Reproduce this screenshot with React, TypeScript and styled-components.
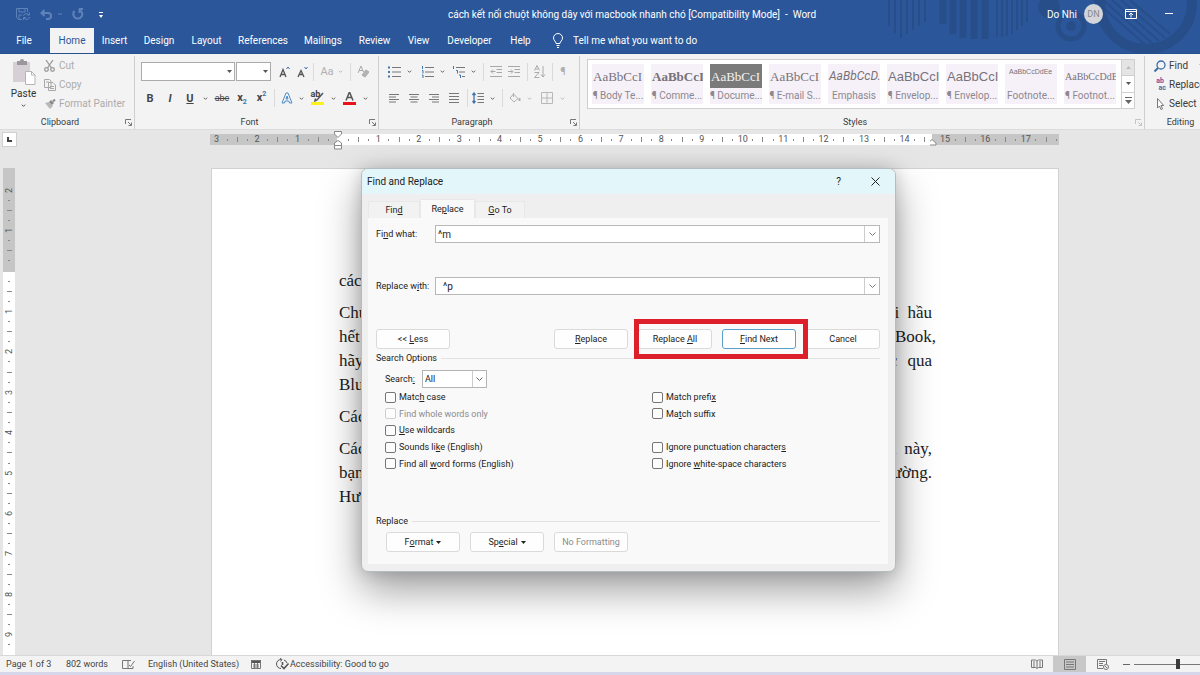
import React from 'react';
import styled, { createGlobalStyle, css } from 'styled-components';

const ui = `Roboto, 'Open Sans', sans-serif`;
const serif = `'Liberation Serif', serif`;

const Global = createGlobalStyle`
  *, *::before, *::after { box-sizing: border-box; }
  body { margin: 0; font-family: ${ui}; font-size: 9px; color: #333; background: #e6e6e6; }
  button, input, select { font-family: inherit; font-size: inherit; color: inherit; margin: 0; }
  button { padding: 0; border: 0; background: none; white-space: nowrap; }
  svg { display: block; flex: none; }
`;

const Shell = styled.div`
  position: relative;
  min-height: 100vh;
  display: flex;
  flex-direction: column;
  overflow: hidden;
`;

/* ---------- header ---------- */
const Header = styled.header`
  position: relative;
  background: #2b579a;
  color: #fff;
  border-bottom: 1px solid #24508f;
`;
const Decoration = styled.svg`
  position: absolute;
  top: 0;
  right: 0;
`;
const TitleBar = styled.div`
  position: relative;
  display: grid;
  grid-template-columns: 217px 1fr 153px;
  align-items: center;
  height: 28px;
`;
const QuickAccess = styled.div`
  display: flex;
  align-items: center;
  gap: 10px;
  padding-left: 16px;
  color: #5f82b8;
`;
const Title = styled.div`
  text-align: center;
  font-size: 10px;
  line-height: 16px;
  padding-top: 2px;
  white-space: nowrap;
`;
const Account = styled.div`
  display: flex;
  align-items: center;
  font-size: 10px;
  white-space: nowrap;
`;
const UserName = styled.span`
  width: 31px;
`;
const Avatar = styled.span`
  width: 20px;
  height: 20px;
  margin: 0 22px 0 7px;
  border-radius: 50%;
  background: #d4d6da;
  color: #888;
  font-size: 9px;
  line-height: 20px;
  text-align: center;
`;
const WindowButton = styled.button`
  display: flex;
  margin-right: 27px;
`;
const Tabs = styled.nav`
  position: relative;
  display: flex;
  height: 25px;
`;
const Tab = styled.button<{ $w: number; $active?: boolean }>`
  width: ${p => p.$w}px;
  font-size: 10px;
  line-height: 26px;
  ${p => p.$active && css`background: #f3f3f3; color: #2b579a;`}
`;
const FileTab = styled(Tab)`
  margin-right: 2px;
`;
const Tell = styled.button`
  display: flex;
  align-items: center;
  gap: 9px;
  margin-left: 12px;
  font-size: 10px;
`;

/* ---------- ribbon ---------- */
const Ribbon = styled.section`
  display: flex;
  height: 76px;
  padding-top: 2px;
  background: #f3f3f3;
  border-bottom: 1px solid #dcdcdc;
  overflow: hidden;
`;
const Group = styled.div<{ $w?: number }>`
  display: flex;
  flex-direction: column;
  flex: ${p => (p.$w ? `0 0 ${p.$w}px` : '1 1 0')};
  min-width: 0;
  border-right: 1px solid #cfcfcf;
  overflow: hidden;
  &:last-child { border-right: 0; }
`;
const GroupBody = styled.div<{ $pad?: number }>`
  flex: 1;
  min-height: 0;
  padding-left: ${p => p.$pad ?? 0}px;
`;
const GroupLabel = styled.div<{ $faint?: boolean; $plain?: boolean }>`
  position: relative;
  height: 14px;
  padding-right: ${p => (p.$plain ? 0 : 14)}px;
  line-height: 14px;
  text-align: center;
  color: #3b3b3b;
  svg { position: absolute; right: 2px; top: 4px; color: ${p => (p.$faint ? '#c4c4c4' : '#777')}; }
`;
const ClipBody = styled(GroupBody)`
  display: flex;
`;
const PasteButton = styled.button`
  display: flex;
  flex-direction: column;
  align-items: center;
  width: 44px;
  padding: 3px 0 0 3px;
  line-height: 18px;
  font-size: 10px;
`;
const Commands = styled.div<{ $faint?: boolean }>`
  display: flex;
  flex-direction: column;
  color: ${p => (p.$faint ? '#ababab' : '#3b3b3b')};
`;
const Command = styled.button`
  display: flex;
  align-items: center;
  gap: 3px;
  height: 19px;
  font-size: 10px;
`;
const ToolRow = styled.div<{ $h: number }>`
  display: flex;
  align-items: center;
  height: ${p => p.$h}px;
`;
const Tool = styled.button<{ $w: number; $faint?: boolean }>`
  display: flex;
  align-items: center;
  justify-content: center;
  width: ${p => p.$w}px;
  height: 20px;
  font-size: 11px;
  color: ${p => (p.$faint ? '#b0b0b0' : '#444')};
`;
const Sep = styled.span<{ $w: number }>`
  width: ${p => p.$w}px;
  height: 18px;
  background: linear-gradient(#dadada, #dadada) center / 1px 100% no-repeat;
`;
const Script = styled.b`
  font-size: 11px;
  line-height: 12px;
  sub, sup { font-size: 7px; line-height: 0; color: #3f74ad; }
`;
const SmallStrike = styled.s`
  font-size: 9px;
`;
const SmallText = styled.b`
  position: absolute;
  left: 0;
  top: -3px;
  font-size: 9px;
`;
const Stack = styled.span`
  position: relative;
`;
const ReplaceGlyph = styled.span`
  display: flex;
  flex-direction: column;
  width: 12px;
  font-size: 7px;
  line-height: 7px;
  font-weight: 700;
  color: #8a4a9c;
  span + span { color: #3d6fa8; text-align: right; }
`;
const SelectWrap = styled.span<{ $w: number }>`
  position: relative;
  display: block;
  width: ${p => p.$w}px;
  margin-right: 1px;
  svg { position: absolute; right: 3px; top: 8px; pointer-events: none; }
`;
const RibbonSelect = styled.select`
  appearance: none;
  display: block;
  width: 100%;
  height: 19px;
  background: #fff;
  border: 1px solid #ababab;
  border-radius: 0;
`;
const Gallery = styled.div`
  display: flex;
  height: 50px;
  margin: 3px 9px 0 0;
  background: #fff;
  border: 1px solid #cfcfcf;
`;
const GalleryItems = styled.div`
  display: flex;
  flex: 1;
  min-width: 0;
  gap: 7px;
  padding: 4px 5px 4px 4px;
`;
const StyleItem = styled.button`
  flex: 1 1 0;
  min-width: 0;
  background: #f6f1f8;
  color: #8c8790;
  overflow: hidden;
`;
const Preview = styled.span<{ $kind: string }>`
  display: block;
  height: 24px;
  line-height: 25px;
  font-family: ${serif};
  font-size: 13px;
  text-align: left;
  padding-left: 1px;
  overflow: hidden;
  color: #77727a;
  ${p => p.$kind === 'bold' && css`font-weight: 700;`}
  ${p => p.$kind === 'inverse' && css`background: #7a7a7a; color: #f2f2f2;`}
  ${p => p.$kind === 'italic' && css`font-family: ${ui}; font-style: italic; font-size: 12px;`}
  ${p => p.$kind === 'sans' && css`font-family: 'Liberation Sans', sans-serif;`}
  ${p => p.$kind === 'tiny' && css`font-family: 'Liberation Sans', sans-serif; font-size: 7px; line-height: 15px; padding-left: 4px;`}
  ${p => p.$kind === 'small' && css`font-size: 10px;`}
`;
const StyleName = styled.span`
  display: block;
  font-size: 10px;
  line-height: 16px;
`;
const GalleryScroll = styled.div`
  display: flex;
  flex-direction: column;
  width: 13px;
  border-left: 1px solid #cfcfcf;
  button {
    flex: 1;
    display: flex;
    align-items: center;
    justify-content: center;
    color: #666;
  }
  button + button { border-top: 1px solid #cfcfcf; }
  button:first-child { background: #e4e4e4; color: #bbb; }
`;
const EditingInner = styled.div`
  display: flex;
  flex-direction: column;
  height: 100%;
  width: 71px;
`;

/* ---------- rulers and document ---------- */
const RulerRow = styled.div`
  display: flex;
  height: 22px;
  padding: 2px 141px 0 2px;
`;
const TabStop = styled.button`
  display: flex;
  align-items: center;
  justify-content: center;
  width: 15px;
  height: 15px;
  background: #fff;
  border: 1px solid #d0d0d0;
`;
const HRuler = styled.div`
  flex: 1;
  height: 11px;
  margin: 2px 0 0 193px;
  background: linear-gradient(90deg, #c6c6c6 15%, #fff 15%, #fff 85%, #c6c6c6 85%);
`;
const HMarks = styled.div`
  display: flex;
  height: 11px;
  margin: 0 -2px 0 2px;
`;
const Mark = styled.span<{ $tick?: number }>`
  position: relative;
  display: flex;
  flex: 1 1 0;
  min-width: 0;
  align-items: center;
  justify-content: center;
  line-height: 11px;
  color: #555;
  white-space: nowrap;
  &::after {
    content: '';
    width: 1px;
    height: ${p => p.$tick ?? 0}px;
    background: #888;
  }
`;
const Marker = styled.svg`
  position: absolute;
  top: -3px;
  left: 50%;
  margin-left: -5px;
`;
const Workspace = styled.main`
  display: flex;
  flex: 1;
  padding: 16px 141px 0 3px;
`;
const VRuler = styled.div`
  position: relative;
  display: flex;
  flex-direction: column;
  width: 12px;
  padding-top: 17px;
  margin: 0 196px -5px 0;
  background: linear-gradient(#c6c6c6 104px, #fff 104px);
`;
const VMark = styled(Mark)`
  min-height: 0;
  &::after {
    width: ${p => p.$tick ?? 0}px;
    height: 1px;
  }
`;
const Turned = styled.span`
  writing-mode: vertical-rl;
  transform: rotate(180deg);
`;
const Page = styled.article`
  flex: 1;
  min-width: 0;
  padding: 100px 126px 0 127px;
  background: #fff;
  border: 1px solid #d2d2d2;
  border-bottom: 0;
  font-family: ${serif};
  font-size: 17px;
  line-height: 24px;
  color: #1c1c1c;
`;
const Para = styled.p`
  margin: 0 0 8px;
`;
const Line = styled.span<{ $open?: boolean; $hang?: boolean }>`
  display: block;
  margin-right: ${p => (p.$hang ? -4 : 0)}px;
  white-space: nowrap;
  text-align: justify;
  text-align-last: ${p => (p.$open ? 'left' : 'justify')};
`;

/* ---------- status bar ---------- */
const StatusBar = styled.footer`
  position: relative;
  display: flex;
  align-items: center;
  height: 20px;
  padding-left: 6px;
  background: #f3f3f3;
  border-top: 1px solid #d8d8d8;
  border-bottom: 3px solid #d6d7ea;
  color: #444;
  white-space: nowrap;
`;
const StatusItem = styled.span<{ $w: number }>`
  display: flex;
  align-items: center;
  width: ${p => p.$w}px;
`;
const Push = styled.span`
  flex: 1;
`;
const ViewButton = styled.button<{ $on?: boolean }>`
  display: flex;
  align-items: center;
  justify-content: center;
  width: 33px;
  height: 16px;
  color: #777;
  background: ${p => (p.$on ? '#c8c8c8' : 'transparent')};
`;
const ZoomSlider = styled.input`
  appearance: none;
  width: 66px;
  height: 12px;
  background: linear-gradient(#777, #777) center / 100% 1px no-repeat;
  &::-webkit-slider-thumb {
    appearance: none;
    width: 4px;
    height: 10px;
    background: #3a3a3a;
  }
`;

/* ---------- dialog ---------- */
const Dialog = styled.section`
  position: absolute;
  top: 168px;
  left: 361px;
  width: 535px;
  background: #efefef;
  border: 1px solid #b4bdbf;
  border-radius: 7px;
  box-shadow: 0 18px 40px rgba(0, 0, 0, 0.38), 0 0 16px rgba(0, 0, 0, 0.16);
  color: #222;
  overflow: hidden;
`;
const DialogTitle = styled.div`
  display: flex;
  align-items: center;
  height: 25px;
  padding: 0 15px 0 5px;
  background: #e3f6f9;
  font-size: 10px;
  h2 { flex: 1; margin: 0; font-size: 10px; line-height: 14px; font-weight: 400; }
  button + button { margin-left: 30px; }
`;
const DialogTabs = styled.div`
  display: flex;
  align-items: flex-end;
  height: 24px;
  padding-left: 6px;
`;
const DialogTab = styled.button<{ $w: number; $on?: boolean }>`
  width: ${p => p.$w}px;
  height: ${p => (p.$on ? 19 : 17)}px;
  background: ${p => (p.$on ? '#f9f9f9' : '#f2f2f2')};
  border: 1px solid #e8e8e8;
  border-bottom: 0;
`;
const Panel = styled.form`
  margin: 0 7px 7px 6px;
  padding: 7px 8px 12px 8px;
  background: #f9f9f9;
`;
const Field = styled.div`
  display: flex;
  align-items: center;
  height: 18px;
  margin-bottom: 34px;
  label { width: 59px; white-space: nowrap; }
`;
const Combo = styled.div`
  display: flex;
  flex: 1;
  height: 18px;
  background: #fff;
  border: 1px solid #b8b8b8;
  input {
    flex: 1;
    min-width: 0;
    padding: 0 2px;
    border: 0;
    outline: 0;
    background: none;
    font-size: 10px;
  }
  button {
    display: flex;
    align-items: center;
    justify-content: center;
    width: 15px;
    border-left: 1px solid #ccc;
    color: #777;
  }
`;
const ButtonRow = styled.div`
  display: flex;
  gap: 10px;
`;
const Btn = styled.button<{ $primary?: boolean }>`
  display: flex;
  align-items: center;
  justify-content: center;
  width: 74px;
  height: 20px;
  background: #fefefe;
  border: 1px solid ${p => (p.$primary ? '#5ba0c8' : '#dadada')};
  border-radius: 3px;
  white-space: pre;
  svg { margin-left: 3px; }
  &:disabled { color: #8c8c8c; }
`;
const Highlight = styled.div`
  position: relative;
  display: flex;
  gap: 10px;
  &::after {
    content: '';
    position: absolute;
    inset: -10px -12px -10px -4px;
    border: 5px solid #dc1f2b;
    pointer-events: none;
  }
`;
const Section = styled.div`
  display: flex;
  align-items: center;
  gap: 4px;
  height: 14px;
  margin-top: 2px;
  &::after { content: ''; flex: 1; height: 1px; background: #e2e2e2; }
`;
const SearchRow = styled.div`
  display: flex;
  align-items: center;
  height: 19px;
  margin: 4px 0 1px;
  padding-left: 9px;
  label { width: 37px; }
`;
const SearchWrap = styled.span`
  position: relative;
  width: 65px;
  svg { position: absolute; right: 4px; top: 7px; color: #666; pointer-events: none; }
  &::after {
    content: '';
    position: absolute;
    top: 1px;
    bottom: 1px;
    right: 14px;
    width: 1px;
    background: #ccc;
  }
`;
const SearchSelect = styled.select`
  appearance: none;
  display: block;
  width: 100%;
  height: 18px;
  padding: 0 2px;
  background: #fff;
  border: 1px solid #b4b4b4;
  border-radius: 0;
`;
const Options = styled.div`
  display: grid;
  grid-template-columns: 267px 1fr;
  grid-template-rows: repeat(5, 1fr);
  grid-auto-flow: column;
  height: 83px;
  padding-left: 9px;
  margin-bottom: 42px;
`;
const Option = styled.label<{ $off?: boolean }>`
  display: flex;
  align-items: center;
  gap: 3px;
  color: ${p => (p.$off ? '#8c8c8c' : 'inherit')};
  input {
    appearance: none;
    width: 11px;
    height: 11px;
    border: 1px solid ${p => (p.$off ? '#cfcfcf' : '#767676')};
    border-radius: 2px;
    background: #fdfdfd;
  }
`;
const FormatRow = styled(ButtonRow)`
  margin-top: 4px;
  padding-left: 10px;
`;

/* ---------- small drawings ---------- */
const Chevron = ({ s = 5 }: { s?: number }) => (
  <svg width={s} height={s} viewBox="0 0 6 6" fill="none" stroke="currentColor"><path d="M1 2l2 2 2-2" /></svg>
);
const Caret = ({ color = '#555' }: { color?: string }) => (
  <svg width="5" height="3" viewBox="0 0 5 3" fill={color}><path d="M0 0h5L2.500 3z" /></svg>
);
const BigChevron = () => (
  <svg width="7" height="5" viewBox="0 0 7 5" fill="none" stroke="currentColor"><path d="M.5.5l3 3 3-3" /></svg>
);
const Launcher = () => (
  <svg width="7" height="7" viewBox="0 0 7 7" fill="none" stroke="currentColor"><path d="M.5 5V.5H6M3 3l3 3M6.500 3.500v3h-3" /></svg>
);
const Lines = ({ d }: { d: string }) => (
  <svg width="12" height="12" viewBox="0 0 12 12" fill="none" stroke="#777"><path d={d} /></svg>
);
const ListIcon = ({ numbered }: { numbered?: boolean }) => (
  <svg width="13" height="12" viewBox="0 0 13 12" fill="none">
    <path d="M4 1.500h9M4 6h9M4 10.500h9" stroke="#777" />
    <path d={numbered ? 'M1.500 0v3M1 4.500h1v3M1 9h1v3' : 'M0 1.500h2M0 6h2M0 10.500h2'} stroke="#3f74ad" strokeWidth={numbered ? 1 : 2} />
  </svg>
);
const IndentIcon = ({ right }: { right?: boolean }) => (
  <svg width="12" height="11" viewBox="0 0 12 11" fill="none" stroke="#a8a8a8">
    <path d="M0 .5h12M6.500 3.500H12M6.500 6.500H12M0 10.500h12" />
    <path d={right ? 'M0 5.500h4.500M3 3.500l2 2-2 2' : 'M5.500 5.500H1M3 3.500l-2 2 2 2'} />
  </svg>
);

const tabs: [string, number][] = [
  ['Insert', 41], ['Design', 48], ['Layout', 47], ['References', 66], ['Mailings', 54],
  ['Review', 49], ['View', 39], ['Developer', 63], ['Help', 39],
];
const styles: [string, string, string][] = [
  ['AaBbCcI', '¶ Body Te...', 'plain'], ['AaBbCcI', '¶ Comme...', 'bold'], ['AaBbCcI', '¶ Docume...', 'inverse'],
  ['AaBbCcI', '¶ E-mail S...', 'plain'], ['AaBbCcD.', 'Emphasis', 'italic'], ['AaBbCcI', '¶ Envelop...', 'sans'],
  ['AaBbCcI', '¶ Envelop...', 'sans'], ['AaBbCcDdEe', 'Footnote...', 'tiny'], ['AaBbCcDdE', '¶ Footnot...', 'small'],
];
const hMarks = Array.from({ length: 84 }, (_, i) => i - 12);
const vMarks = Array.from({ length: 47 }, (_, i) => i - 8);
const tickSize = (n: number) => (n % 4 === 0 ? 0 : n % 2 === 0 ? 5 : 2);

const leftOptions: [React.ReactNode, boolean][] = [
  [<>Matc<u>h</u> case</>, false],
  [<>Find whole words only</>, true],
  [<><u>U</u>se wildcards</>, false],
  [<>Sounds li<u>k</u>e (English)</>, false],
  [<>Find all <u>w</u>ord forms (English)</>, false],
];

export default function App() {
  return (
    <Shell>
      <Global />
      <Header>
        <Decoration width="320" height="53" viewBox="0 0 320 53" fill="none" stroke="#284e8a">
          <path d="M9 0v26M15 0v33M21 0v38M27 0v34M33 0v30M39 0v26M45 0v22" strokeWidth="2" />
          <path d="M63 0v24M73 0v34M83 0v38M94 0v39M105 0v39" strokeWidth="7" />
          <path d="M117 0v37M122 0v37M127 0v36M132 0v34M137 0v30M142 0v26M147 0v22" strokeWidth="2" />
          <circle cx="169" cy="7" r="11" fill="#284e8a" stroke="none" />
          <circle cx="191" cy="26" r="13" strokeWidth="5" />
          <circle cx="191" cy="26" r="5" fill="#284e8a" stroke="none" />
          <circle cx="266" cy="3" r="46" strokeWidth="10" />
          <path d="M223 0l50 44M232 0l47 41M241 0l44 38M250 0l40 34M214 0l54 47" strokeWidth="2" />
        </Decoration>
        <TitleBar>
          <QuickAccess>
            <svg width="14" height="12" viewBox="0 0 14 12" fill="none" stroke="currentColor"><path d="M6 11.500H2.500l-2-2V.5h11V4M3 .5v3.500h6V.5M3 11V7h3M7.500 8a3 3 0 015.500-1M13.500 9a3 3 0 01-5.500 1M13.500 4.500V7H11M7.500 12V9.500H10" /></svg>
            <svg width="22" height="11" viewBox="0 0 22 11" fill="none" stroke="currentColor" strokeWidth="2"><path d="M4.500 1L1.500 4l3 3M2 4h6a3 3 0 010 6H6" /><path d="M18 5h4" strokeWidth="1" /></svg>
            <svg width="12" height="12" viewBox="0 0 12 12" fill="none" stroke="currentColor" strokeWidth="2"><path d="M8.500 2.500A4.500 4.500 0 112.500 3M7 1h4M7.500 1v4" /></svg>
            <svg width="12" height="7" viewBox="0 0 12 7"><path d="M5 1.500h4" stroke="#fff" /><path d="M5 4h4l-2 3z" fill="#fff" /></svg>
          </QuickAccess>
          <Title>cách kết nối chuột không dây với macbook nhanh chó [Compatibility Mode]&nbsp; -&nbsp; Word</Title>
          <Account>
            <UserName>Do Nhi</UserName>
            <Avatar>DN</Avatar>
            <WindowButton aria-label="Ribbon display options">
              <svg width="12" height="10" viewBox="0 0 12 10" fill="none" stroke="#fff"><path d="M.5.5h11v9H.5zM.5 2.500h11M6 8.500V4.500M4 6l2-2 2 2" /></svg>
            </WindowButton>
            <WindowButton aria-label="Minimize">
              <svg width="9" height="5" viewBox="0 0 9 5" stroke="#fff"><path d="M1 1.500h8" /></svg>
            </WindowButton>
          </Account>
        </TitleBar>
        <Tabs>
          <FileTab $w={48}>File</FileTab>
          <Tab $w={44} $active>Home</Tab>
          {tabs.map(([t, w]) => <Tab key={t} $w={w}>{t}</Tab>)}
          <Tell>
            <svg width="12" height="15" viewBox="0 0 12 15" fill="none" stroke="#fff"><path d="M4 10.500C4 8.500 1.500 7.500 1.500 5a4.500 4.500 0 019 0c0 2.500-2.500 3.500-2.500 5.500zM4.500 12.500h3M5 14.500h2" /></svg>
            Tell me what you want to do
          </Tell>
        </Tabs>
      </Header>

      <Ribbon>
        <Group $w={135}>
          <ClipBody>
            <PasteButton>
              <svg width="24" height="26" viewBox="0 0 24 26"><path d="M1 3h17v20H1z" fill="#d6d0d6" /><path d="M5 2h3a2 2 0 014 0h3v4H5z" fill="#9a969a" /><path d="M13.500 12.500h6l3.500 3.500v9.500h-9.500z" fill="#fff" stroke="#b5b5b5" /><path d="M19.500 12.500V16H23" fill="none" stroke="#b5b5b5" /></svg>
              Paste
              <Chevron />
            </PasteButton>
            <Commands $faint>
              <Command>
                <svg width="12" height="12" viewBox="0 0 12 12" fill="none" stroke="#9a9a9a" strokeWidth="1.300"><path d="M2 0l5.500 8M9 0L3.500 8" /><circle cx="2.500" cy="9.500" r="1.800" /><circle cx="8.500" cy="9.500" r="1.800" /></svg>
                Cut
              </Command>
              <Command>
                <svg width="12" height="12" viewBox="0 0 12 12" fill="#f3f3f3" stroke="#a8a8a8"><path d="M.5.5h5l1.500 1.500v6.500H.5zM4.500 3.500h4.500l2.500 2.500v5.500h-7zM6 7.500h4M6 9.500h4M2 3h3" /></svg>
                Copy
              </Command>
              <Command>
                <svg width="12" height="12" viewBox="0 0 12 12"><path d="M1 5l4-1 4 4-3 3z" fill="#b9b9b9" /><path d="M5 4l2-2 3 3-2 2z" fill="#8a8a8a" /><path d="M9 3.500L11 1.500" stroke="#8a8a8a" strokeWidth="2" /></svg>
                Format Painter
              </Command>
            </Commands>
          </ClipBody>
          <GroupLabel>Clipboard<Launcher /></GroupLabel>
        </Group>

        <Group $w={244}>
          <GroupBody $pad={6}>
            <ToolRow $h={31}>
              <SelectWrap $w={94}><RibbonSelect aria-label="Font" /><Caret /></SelectWrap>
              <SelectWrap $w={35}><RibbonSelect aria-label="Font size" /><Caret /></SelectWrap>
              <Tool $w={24} aria-label="Grow font"><svg width="11" height="12" viewBox="0 0 11 12" fill="none"><path d="M1 11L4 3.500 7 11M2 8.500h4" stroke="#555" strokeWidth="1.300" /><path d="M7.500 3L9 1l1.500 2" stroke="#3f74ad" /></svg></Tool>
              <Tool $w={12} aria-label="Shrink font"><svg width="11" height="12" viewBox="0 0 11 12" fill="none"><path d="M1 11L4 4.500 7 11M2 8.500h4" stroke="#555" strokeWidth="1.300" /><path d="M7.500 1L9 3l1.500-2" stroke="#3f74ad" /></svg></Tool>
              <Sep $w={11} />
              <Tool $w={16} $faint>Aa</Tool>
              <Tool $w={10} $faint aria-label="Change case"><Chevron /></Tool>
              <Sep $w={11} />
              <Tool $w={14} $faint aria-label="Clear formatting"><svg width="12" height="13" viewBox="0 0 12 13" fill="none" stroke="#aaa"><path d="M1 8L4 1l2.500 6M2 5.500h4" /><path d="M5 10l4-5 3 2-4 5z" fill="#b4b4b4" /></svg></Tool>
            </ToolRow>
            <ToolRow $h={22}>
              <Tool $w={18}><b>B</b></Tool>
              <Tool $w={22}><b><i>I</i></b></Tool>
              <Tool $w={18}><b><u>U</u></b></Tool>
              <Tool $w={12} aria-label="Underline style"><Chevron /></Tool>
              <Tool $w={22}><SmallStrike>abc</SmallStrike></Tool>
              <Tool $w={18}><Script>x<sub>2</sub></Script></Tool>
              <Tool $w={21}><Script>x<sup>2</sup></Script></Tool>
              <Sep $w={5} />
              <Tool $w={20} aria-label="Text effects"><svg width="12" height="12" viewBox="0 0 12 12" fill="none" stroke="#4d8cc8" strokeLinejoin="round"><path d="M1 11L5 1h2l4 10H8.500l-.7-2H4.200l-.7 2zM5 7h2L6 4z" /></svg></Tool>
              <Tool $w={8} aria-label="Text effect options"><Chevron /></Tool>
              <Tool $w={24} aria-label="Highlight">
                <Stack><SmallText>ab</SmallText><svg width="13" height="13" viewBox="0 0 13 13"><path d="M0 10h13v3H0z" fill="#fdf21c" /><path d="M12 1L6 8l-2 1 .5-2.500" stroke="#555" strokeWidth="1.500" fill="none" /></svg></Stack>
              </Tool>
              <Tool $w={8} aria-label="Highlight colour"><Chevron /></Tool>
              <Tool $w={24} aria-label="Font colour"><svg width="13" height="13" viewBox="0 0 13 13"><path d="M0 10h13v3H0z" fill="#e8121b" /><path d="M3 8.500L6.500 0 10 8.500M4.500 5.500h4" stroke="#555" strokeWidth="1.500" fill="none" /></svg></Tool>
              <Tool $w={8} aria-label="Colour options"><Chevron /></Tool>
            </ToolRow>
          </GroupBody>
          <GroupLabel>Font<Launcher /></GroupLabel>
        </Group>

        <Group $w={201}>
          <GroupBody $pad={7}>
            <ToolRow $h={31}>
              <Tool $w={16} aria-label="Bullets"><ListIcon /></Tool>
              <Tool $w={15} aria-label="Bullet options"><Chevron /></Tool>
              <Tool $w={20} aria-label="Numbering"><ListIcon numbered /></Tool>
              <Tool $w={10} aria-label="Number options"><Chevron /></Tool>
              <Tool $w={22} aria-label="Multilevel list"><svg width="13" height="12" viewBox="0 0 13 12" fill="none"><path d="M4 1.500h9M7 6h6M10 10.500h3" stroke="#777" /><path d="M1.500 0v3M4 4.500h1.500v3M7 9h1.500v3" stroke="#3f74ad" /></svg></Tool>
              <Tool $w={8} aria-label="Multilevel options"><Chevron /></Tool>
              <Sep $w={12} />
              <Tool $w={14} aria-label="Decrease indent"><IndentIcon /></Tool>
              <Tool $w={22} aria-label="Increase indent"><IndentIcon right /></Tool>
              <Sep $w={4} />
              <Tool $w={22} aria-label="Sort"><svg width="12" height="13" viewBox="0 0 12 13" fill="none" stroke="#aaa"><path d="M.5 5.500L3 .5l2.500 5M1.500 4h3M.5 7.500h4.500l-4.500 5h5M9 1v11M7 9.500L9 12l2-2.500" /></svg></Tool>
              <Sep $w={2} />
              <Tool $w={20} $faint>¶</Tool>
            </ToolRow>
            <ToolRow $h={22}>
              <Tool $w={16} aria-label="Align left"><Lines d="M1 2.500h10M1 5h7M1 7.500h10M1 10h7" /></Tool>
              <Tool $w={24} aria-label="Center"><Lines d="M1 2.500h10M2.500 5h7M1 7.500h10M2.500 10h7" /></Tool>
              <Tool $w={16} aria-label="Align right"><Lines d="M1 2.500h10M4 5h7M1 7.500h10M4 10h7" /></Tool>
              <Tool $w={24} aria-label="Justify"><Lines d="M1 1.500h10M1 4.500h10M1 7.500h10M1 10.500h10" /></Tool>
              <Sep $w={2} />
              <Tool $w={20} aria-label="Line spacing"><svg width="12" height="12" viewBox="0 0 12 12" fill="none"><path d="M5.500 1.500H12M5.500 4.500H12M5.500 7.500H12M5.500 10.500H12" stroke="#777" /><path d="M2 1v10M.5 3L2 1l1.500 2M.5 9L2 11l1.500-2" stroke="#3f74ad" strokeWidth="1.300" /></svg></Tool>
              <Tool $w={8} aria-label="Spacing options"><Chevron /></Tool>
              <Sep $w={12} />
              <Tool $w={14} aria-label="Shading"><svg width="12" height="12" viewBox="0 0 12 12" fill="none" stroke="#b0b0b0"><path d="M4.500 2L9 6.500 5 10 1 6zM4.500 5V1" /><path d="M10.500 6v3" strokeWidth="2" /></svg></Tool>
              <Tool $w={14} $faint aria-label="Shading options"><Chevron /></Tool>
              <Tool $w={22} aria-label="Borders"><svg width="12" height="12" viewBox="0 0 12 12" fill="none" stroke="#b8b8b8"><path d="M.5.5h11v11H.5zM6 1v10M1 6h10" /></svg></Tool>
              <Tool $w={8} $faint aria-label="Border options"><Chevron /></Tool>
            </ToolRow>
          </GroupBody>
          <GroupLabel>Paragraph<Launcher /></GroupLabel>
        </Group>

        <Group>
          <GroupBody $pad={7}>
            <Gallery>
              <GalleryItems>
                {styles.map(([sample, name, kind], i) => (
                  <StyleItem key={i}><Preview $kind={kind}>{sample}</Preview><StyleName>{name}</StyleName></StyleItem>
                ))}
              </GalleryItems>
              <GalleryScroll>
                <button aria-label="Previous styles"><svg width="5" height="3" viewBox="0 0 5 3" fill="currentColor"><path d="M0 3h5L2.500 0z" /></svg></button>
                <button aria-label="Next styles"><Caret /></button>
                <button aria-label="More styles"><svg width="7" height="7" viewBox="0 0 7 7" fill="currentColor"><path d="M0 0h7v1H0zM0 3h7L3.500 7z" /></svg></button>
              </GalleryScroll>
            </Gallery>
          </GroupBody>
          <GroupLabel $faint>Styles<Launcher /></GroupLabel>
        </Group>

        <Group $w={55}>
          <EditingInner>
            <GroupBody $pad={9}>
              <Commands>
                <Command><svg width="12" height="12" viewBox="0 0 12 12" fill="none" stroke="#3d6fa8"><circle cx="7" cy="5" r="4" strokeWidth="1.300" /><path d="M4 8L.5 11.500" strokeWidth="2" /></svg>Find&nbsp;&nbsp;&nbsp;<Chevron /></Command>
                <Command><ReplaceGlyph><span>ab</span><span>ac</span></ReplaceGlyph>Replace</Command>
                <Command><svg width="12" height="12" viewBox="0 0 12 12" fill="#fff" stroke="#777"><path d="M3.500.5v9.500L5.500 8l1.500 3.500 1.500-.7L7 7.500h2.700z" /></svg>Select</Command>
              </Commands>
            </GroupBody>
            <GroupLabel $plain>Editing</GroupLabel>
          </EditingInner>
        </Group>
      </Ribbon>

      <RulerRow>
        <TabStop aria-label="Tab selector"><svg width="5" height="5" viewBox="0 0 5 5"><path d="M1 0v4h4" fill="none" stroke="#444" strokeWidth="2" /></svg></TabStop>
        <HRuler>
          <HMarks>
            {hMarks.map(n => (
              <Mark key={n} $tick={n === 59 ? 0 : tickSize(n)}>
                {n !== 0 && n % 4 === 0 ? Math.abs(n / 4) : null}
                {n === 0 && <Marker width="10" height="19" viewBox="0 0 10 19" fill="#fff" stroke="#888"><path d="M1.500.5h7v2.500L5 6.500 1.500 3zM5 9.500L8.500 12v2.500h-7V12zM1.500 14.500h7v3.500h-7z" /></Marker>}
                {n === 59 && <Marker width="10" height="19" viewBox="0 0 10 19" fill="#fff" stroke="#888"><path d="M2 8.500l4 3.500v2H-2v-2z" /></Marker>}
              </Mark>
            ))}
          </HMarks>
        </HRuler>
      </RulerRow>

      <Workspace>
        <VRuler>
          {vMarks.map(n => (
            <VMark key={n} $tick={n === 0 ? 0 : tickSize(n)}>
              {n !== 0 && n % 4 === 0 ? <Turned>{Math.abs(n / 4)}</Turned> : null}
            </VMark>
          ))}
        </VRuler>
        <Page>
          <Para><Line $open>cách kết nối chuột không dây với macbook</Line></Para>
          <Para>
            <Line>Chuột không dây là thiết bị nhỏ gọn, tiện lợi và có thể tương thích tốt với hầu</Line>
            <Line $hang>hết các dòng máy tính hiện nay. Nếu bạn đang sử dụng một chiếc MacBook,</Line>
            <Line>hãy thử kết nối chuột không dây bằng đầu thu USB hoặc kết nối được qua</Line>
            <Line $open>Bluetooth theo hướng dẫn sau.</Line>
          </Para>
          <Para><Line $open>Cách kết nối chuột không dây với MacBook</Line></Para>
          <Para>
            <Line>Cách kết nối này rất đơn giản, dễ làm và nhanh chóng. Với cách thực hiện này,</Line>
            <Line>bạn chỉ cần làm theo đúng các bước để dùng được chuột như bình thường.</Line>
            <Line $open>Hướng dẫn chi tiết như sau:</Line>
          </Para>
        </Page>
      </Workspace>

      <StatusBar>
        <StatusItem $w={60}>Page 1 of 3</StatusItem>
        <StatusItem $w={56}>802 words</StatusItem>
        <StatusItem $w={26}><svg width="13" height="11" viewBox="0 0 13 11" fill="none" stroke="#777"><path d="M6 1.500H.5v8H6zM6 1.500h3M6 9.500h5V7M7 6l1.500 1.500L12.500 2" /></svg></StatusItem>
        <StatusItem $w={103}>English (United States)</StatusItem>
        <StatusItem $w={25}><svg width="10" height="10" viewBox="0 0 10 10"><path d="M0 1h10v3H0z" fill="#555" /><path d="M.5 1.500h9v8h-9zM2 6h6M2 8h6M3.500 4v5M6.500 4v5" fill="none" stroke="#777" /></svg></StatusItem>
        <svg width="14" height="12" viewBox="0 0 14 12" fill="none" stroke="#555"><path d="M5 1.500A4.500 4.500 0 005 10.500M4 .5l2 1-1.500 2M8 2a4.500 4.500 0 013 3" /><path d="M6.500 4v3M5 7.500l3 3 4.500-5" strokeWidth="1.600" /></svg>
        <span>Accessibility: Good to go</span>
        <Push />
        <ViewButton aria-label="Read mode"><svg width="12" height="10" viewBox="0 0 12 10" fill="none" stroke="currentColor"><path d="M.5 1h4L6 2l1.500-1h4v7.500h-4L6 9.500l-1.500-1h-4zM6 2v7M2 3h2M2 5h2M2 7h2M8 3h2M8 5h2M8 7h2" /></svg></ViewButton>
        <ViewButton $on aria-label="Print layout"><svg width="12" height="11" viewBox="0 0 12 11" fill="none" stroke="currentColor"><path d="M.5.5h11v10H.5zM2 3h8M2 5.500h8M2 8h8" /></svg></ViewButton>
        <ViewButton aria-label="Web layout"><svg width="12" height="11" viewBox="0 0 12 11" fill="none" stroke="currentColor"><path d="M6 9.500H.5v-9h9V5M2 2.500h6M2 4.500h4M2 6.500h4" /><circle cx="9" cy="8" r="2.500" /><path d="M8 7l2 2" /></svg></ViewButton>
        <svg width="15" height="8" viewBox="0 0 15 8" stroke="#666"><path d="M4 4.500h7" /></svg>
        <ZoomSlider type="range" aria-label="Zoom" defaultValue={68} />
      </StatusBar>

      <Dialog role="dialog" aria-label="Find and Replace">
        <DialogTitle>
          <h2>Find and Replace</h2>
          <button aria-label="Help">?</button>
          <button aria-label="Close"><svg width="9" height="9" viewBox="0 0 9 9" stroke="#222"><path d="M.5.5l8 8M8.500.5l-8 8" /></svg></button>
        </DialogTitle>
        <DialogTabs>
          <DialogTab $w={52}>Fin<u>d</u></DialogTab>
          <DialogTab $w={55} $on>Re<u>p</u>lace</DialogTab>
          <DialogTab $w={50}><u>G</u>o To</DialogTab>
        </DialogTabs>
        <Panel onSubmit={e => e.preventDefault()}>
          <Field>
            <label htmlFor="find">Fi<u>n</u>d what:</label>
            <Combo><input id="find" defaultValue="^m" /><button type="button" aria-label="Recent searches"><BigChevron /></button></Combo>
          </Field>
          <Field>
            <label htmlFor="with">Replace w<u>i</u>th:</label>
            <Combo><input id="with" defaultValue="  ^p" /><button type="button" aria-label="Recent replacements"><BigChevron /></button></Combo>
          </Field>
          <ButtonRow>
            <Btn type="button">&lt;&lt; <u>L</u>ess</Btn>
            <Push />
            <Btn type="button"><u>R</u>eplace</Btn>
            <Highlight>
              <Btn type="button">Replace <u>A</u>ll</Btn>
              <Btn type="button" $primary><u>F</u>ind Next</Btn>
            </Highlight>
            <Btn type="button">Cancel</Btn>
          </ButtonRow>
          <Section>Search Options</Section>
          <SearchRow>
            <label htmlFor="dir">Search<u>:</u></label>
            <SearchWrap><SearchSelect id="dir"><option>All</option></SearchSelect><BigChevron /></SearchWrap>
          </SearchRow>
          <Options>
            {leftOptions.map(([label, off], i) => (
              <Option key={i} $off={off}><input type="checkbox" disabled={off} /><span>{label}</span></Option>
            ))}
            <Option><input type="checkbox" /><span>Match prefi<u>x</u></span></Option>
            <Option><input type="checkbox" /><span>Ma<u>t</u>ch suffix</span></Option>
            <span />
            <Option><input type="checkbox" /><span>Ignore punctuation character<u>s</u></span></Option>
            <Option><input type="checkbox" /><span>Ignore <u>w</u>hite-space characters</span></Option>
          </Options>
          <Section>Replace</Section>
          <FormatRow>
            <Btn type="button">F<u>o</u>rmat<Caret color="#222" /></Btn>
            <Btn type="button">Sp<u>e</u>cial<Caret color="#222" /></Btn>
            <Btn type="button" disabled>No Formatting</Btn>
          </FormatRow>
        </Panel>
      </Dialog>
    </Shell>
  );
}
